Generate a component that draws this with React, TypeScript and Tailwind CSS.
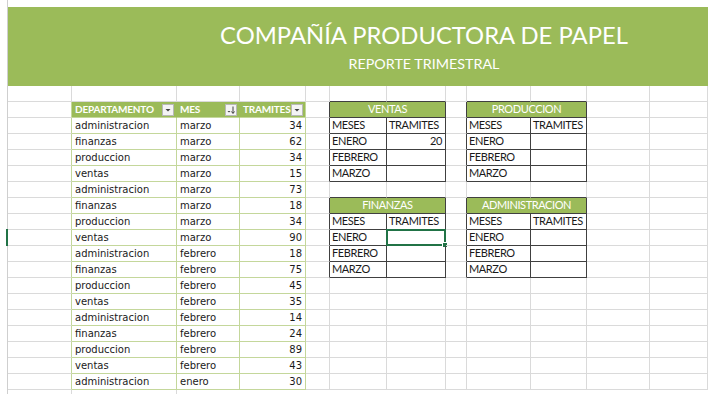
import React from "react";

type Kind = "plain" | "mh" | "md" | "th" | "td";

const rows: [string, string, string][] = [
  ["administracion", "marzo", "34"],
  ["finanzas", "marzo", "62"],
  ["produccion", "marzo", "34"],
  ["ventas", "marzo", "15"],
  ["administracion", "marzo", "73"],
  ["finanzas", "marzo", "18"],
  ["produccion", "marzo", "34"],
  ["ventas", "marzo", "90"],
  ["administracion", "febrero", "18"],
  ["finanzas", "febrero", "75"],
  ["produccion", "febrero", "45"],
  ["ventas", "febrero", "35"],
  ["administracion", "febrero", "14"],
  ["finanzas", "febrero", "24"],
  ["produccion", "febrero", "89"],
  ["ventas", "febrero", "43"],
  ["administracion", "enero", "30"],
];

const tables = [
  { r: 1, c: 5, title: "VENTAS", vals: ["20", "", ""] },
  { r: 1, c: 8, title: "PRODUCCION", vals: ["", "", ""] },
  { r: 7, c: 5, title: "FINANZAS", vals: ["", "", ""] },
  { r: 7, c: 8, title: "ADMINISTRACION", vals: ["", "", ""] },
];

const MESES = ["ENERO", "FEBRERO", "MARZO"];
const NROWS = 19;
const NCOLS = 12;

function kind(r: number, c: number): Kind {
  if (r === 1 && c >= 1 && c <= 3) return "mh";
  if (r >= 2 && r <= 18 && c >= 1 && c <= 3) return "md";
  for (const t of tables) {
    if (c === t.c || c === t.c + 1) {
      if (r === t.r) return "th";
      if (r > t.r && r <= t.r + 4) return "td";
    }
  }
  return "plain";
}

const isDark = (k: Kind) => k === "th" || k === "td";
const isMain = (k: Kind) => k === "mh" || k === "md";

function rightBorder(r: number, c: number, span: number) {
  const a = kind(r, c + span - 1);
  const b = c + span < NCOLS ? kind(r, c + span) : "plain";
  if (isDark(a) || isDark(b)) return "border-r-[#404040]";
  if (a === "mh" && c + span - 1 < 3) return "border-r-[#9bbb59]";
  if (isMain(a) || isMain(b)) return "border-r-[#c4d79b]";
  return "border-r-[#dadada]";
}

function bottomBorder(r: number, c: number) {
  const a = kind(r, c);
  const b = r + 1 < NROWS ? kind(r + 1, c) : "plain";
  if (isDark(a) || isDark(b)) return "border-b-[#404040]";
  if (isMain(a)) return "border-b-[#c4d79b]";
  return "border-b-[#dadada]";
}

function FilterButton({ sorted }: { sorted?: boolean }) {
  return (
    <span className="ml-auto mr-[2px] flex h-[12px] w-[12px] shrink-0 items-center justify-center border border-[#b8b8b8] bg-[#f4f4f4]">
      {sorted ? (
        <svg width="10" height="10" viewBox="0 0 10 10">
          <path d="M1.5 6 L4.5 6 L3 7.5 Z" fill="#404040" />
          <path d="M7 1.5 V8" stroke="#404040" strokeWidth="1" />
          <path d="M5.5 6.5 L7 8.5 L8.5 6.5" stroke="#404040" strokeWidth="1" fill="none" />
        </svg>
      ) : (
        <svg width="10" height="10" viewBox="0 0 10 10">
          <path d="M2.5 4 L7.5 4 L5 6.5 Z" fill="#404040" />
        </svg>
      )}
    </span>
  );
}

const small = "font-['Lato',sans-serif] text-[11px] tracking-[-0.4px] text-[#1a1a1a]";

function cellContent(r: number, c: number): { node: React.ReactNode; span: number; cls: string } {
  const k = kind(r, c);
  if (k === "mh") {
    const labels = ["DEPARTAMENTO", "MES", "TRAMITES"];
    return {
      span: 1,
      cls: "bg-[#9bbb59] pl-[3px] font-['Lato',sans-serif] text-[10px] font-bold tracking-[-0.2px] text-white",
      node: (
        <>
          <span>{labels[c - 1]}</span>
          <FilterButton sorted={c === 2} />
        </>
      ),
    };
  }
  if (k === "md") {
    const row = rows[r - 2];
    if (c === 3)
      return {
        span: 1,
        cls: "justify-end pr-[3px] font-['DejaVu_Sans',sans-serif] text-[10px] text-[#1a1a1a]",
        node: row[2],
      };
    return {
      span: 1,
      cls: "pl-[3px] font-['DejaVu_Sans',sans-serif] text-[10px] text-[#1a1a1a]",
      node: row[c - 1],
    };
  }
  for (const t of tables) {
    if (c === t.c || c === t.c + 1) {
      const dr = r - t.r;
      if (dr === 0) {
        return {
          span: 2,
          cls: "justify-center bg-[#9bbb59] font-['Lato',sans-serif] text-[11px] tracking-[-0.4px] text-white",
          node: t.title,
        };
      }
      if (dr === 1) {
        return { span: 1, cls: `pl-[2px] ${small}`, node: c === t.c ? "MESES" : "TRAMITES" };
      }
      if (dr >= 2 && dr <= 4) {
        if (c === t.c) return { span: 1, cls: `pl-[2px] ${small}`, node: MESES[dr - 2] };
        return { span: 1, cls: `justify-end pr-[3px] ${small}`, node: t.vals[dr - 2] };
      }
    }
  }
  return { span: 1, cls: "", node: null };
}

export default function App() {
  const cells: React.ReactNode[] = [];
  for (let r = 0; r < NROWS; r++) {
    for (let c = 0; c < NCOLS; c++) {
      const k = kind(r, c);
      // merged header second column is covered by the first
      if (k === "th" && tables.some((t) => t.r === r && t.c + 1 === c)) continue;
      const { node, span, cls } = cellContent(r, c);
      const selected = r === 9 && c === 6;
      const rowMark = r === 9 && c === 0;
      cells.push(
        <div
          key={`${r}-${c}`}
          className={`relative flex h-[16px] items-center overflow-visible whitespace-nowrap border-r border-b ${
            span === 2 ? "col-span-2" : ""
          } ${rightBorder(r, c, span)} ${bottomBorder(r, c)} ${cls}`}
        >
          {node}
          {selected && (
            <div className="absolute -left-[1px] -top-[1px] h-[17px] w-[60px] border-2 border-[#217346]">
              <div className="absolute -bottom-[4px] -right-[4px] h-[6px] w-[6px] border border-white bg-[#217346]" />
            </div>
          )}
          {rowMark && <div className="absolute -left-[2px] -top-[1px] h-[17px] w-[2px] bg-[#217346]" />}
        </div>
      );
    }
  }

  return (
    <div className="h-[401px] w-[718px] overflow-hidden bg-white">
      <div className="ml-[7px] w-[701px] border-l border-l-[#cfcfcf] pt-[7px]">
        <div className="flex h-[79px] w-[700px] flex-col items-center bg-[#9bbb59] pl-[132px] font-['Lato',sans-serif] text-white">
          <div className="mt-[13px] text-[23.8px] leading-[30px]">COMPAÑÍA PRODUCTORA DE PAPEL</div>
          <div className="mt-[5px] text-[14.3px] leading-[18px]">REPORTE TRIMESTRAL</div>
        </div>
        <div className="grid grid-cols-[64px_105px_63px_66px_24px_57px_59px_21px_64px_56px_63px_58px]">
          {cells}
        </div>
        <div className="grid h-[4px] grid-cols-[64px_105px_63px_66px_24px_57px_59px_21px_64px_56px_63px_58px]">
          <div className="border-r border-r-[#dadada]" />
          <div className="border-r border-r-[#dadada]" />
        </div>
      </div>
    </div>
  );
}
